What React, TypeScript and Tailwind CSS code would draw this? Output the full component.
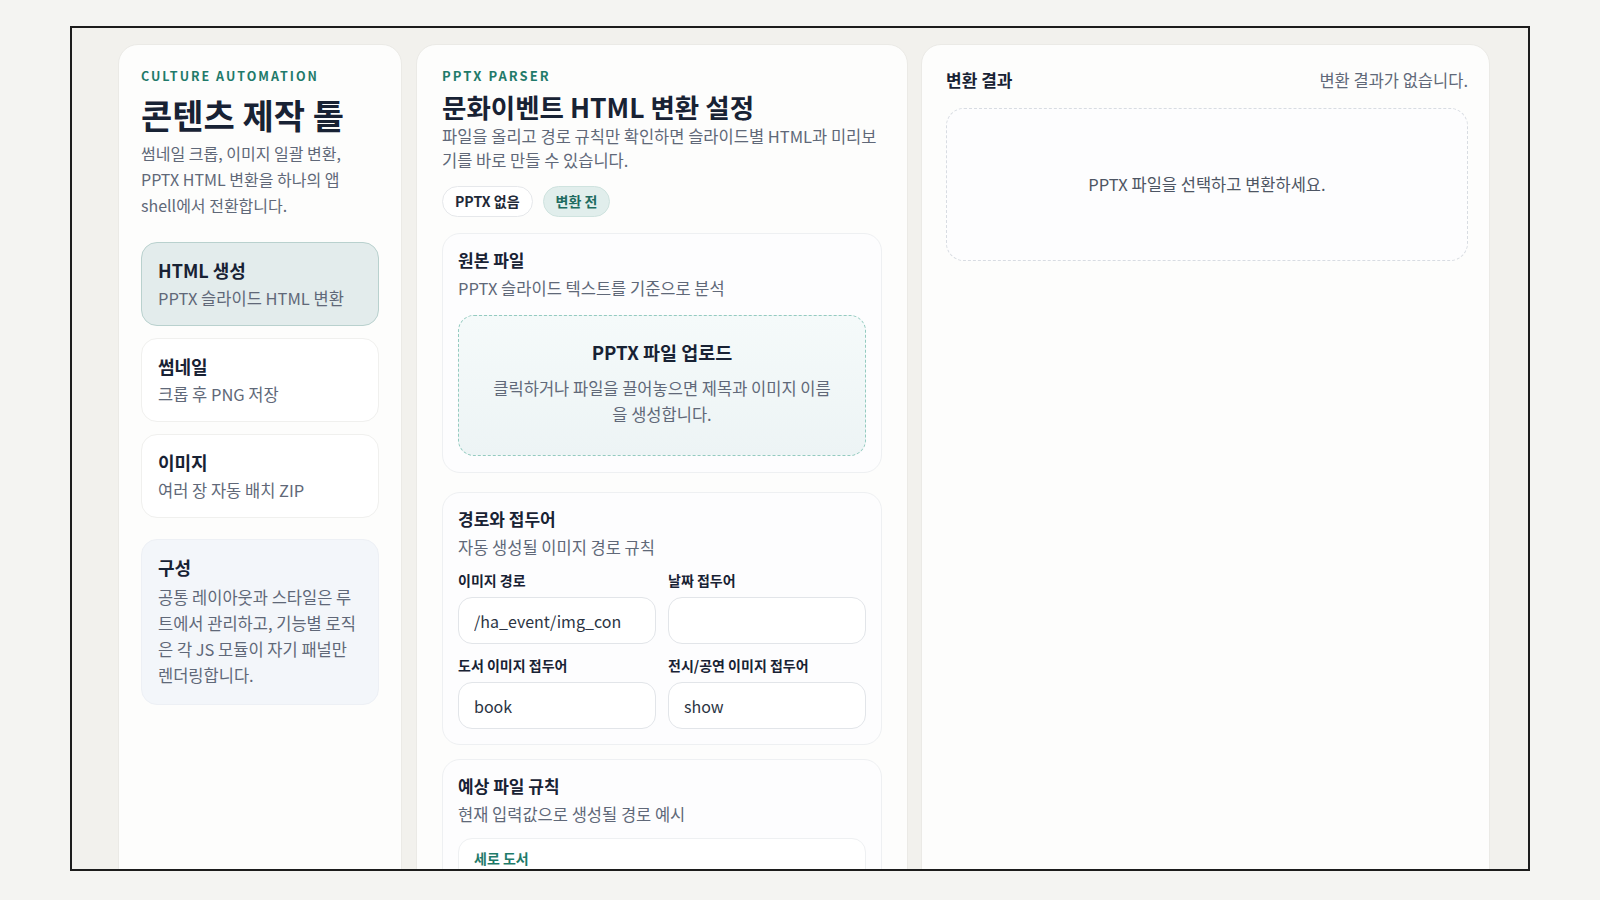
import React from 'react';

const navItems = [
    {title: 'HTML 생성', desc: 'PPTX 슬라이드 HTML 변환', active: true},
    {title: '썸네일', desc: '크롭 후 PNG 저장', active: false},
    {title: '이미지', desc: '여러 장 자동 배치 ZIP', active: false},
];

const fields = [
    {label: '이미지 경로', value: '/ha_event/img_con'},
    {label: '날짜 접두어', value: ''},
    {label: '도서 이미지 접두어', value: 'book'},
    {label: '전시/공연 이미지 접두어', value: 'show'},
];

const Sidebar = () => (
    <aside className="w-[284px] shrink-0 h-[860px] rounded-[20px] bg-[#fdfdfc] border border-[#ebeae6] px-[22px] pt-[23px]">
        <p className="text-[12.5px] font-bold tracking-[0.16em] leading-4 text-[#1f7a6a]">CULTURE AUTOMATION</p>
        <h1 className="mt-[10px] text-[34px] font-bold leading-[42px] text-[#182234]">콘텐츠 제작 톨</h1>
        <p className="mt-[4px] w-[220px] text-[16px] leading-[26px] text-[#606878]">
            썸네일 크롭, 이미지 일괄 변환, PPTX HTML 변환을 하나의 앱 shell에서 전환합니다.
        </p>

        <nav className="mt-[24px] flex flex-col gap-3">
            {navItems.map((item) => (
                <div
                    key={item.title}
                    className={
                        item.active
                            ? 'rounded-[16px] border border-[#b9d1ce] bg-[#e3ecec] px-4 pt-[15px] pb-[16px]'
                            : 'rounded-[16px] border border-[#f0f0ee] bg-white px-4 pt-[15px] pb-[16px]'
                    }
                >
                    <p className="text-[18px] font-bold leading-6 text-[#182234]">{item.title}</p>
                    <p className="mt-[5px] text-[16.5px] leading-[22px] text-[#606878]">{item.desc}</p>
                </div>
            ))}
        </nav>

        <div className="mt-[21px] rounded-[16px] border border-[#edf0f5] bg-[#f3f6fa] px-4 pt-[15px] pb-4">
            <p className="text-[18px] font-bold leading-6 text-[#182234]">구성</p>
            <p className="mt-[5px] w-[204px] text-[16.5px] leading-[26px] text-[#606878]">
                공통 레이아웃과 스타일은 루트에서 관리하고, 기능별 로직은 각 JS 모듈이 자기 패널만 렌더링합니다.
            </p>
        </div>
    </aside>
);

const SectionHead = ({title, desc}: {title: string; desc: string}) => (
    <>
        <h3 className="text-[17px] font-bold leading-[22px] text-[#182234]">{title}</h3>
        <p className="mt-[6px] text-[16.5px] leading-[22px] text-[#606878]">{desc}</p>
    </>
);

const Settings = () => (
    <section className="w-[492px] shrink-0 h-[860px] rounded-[20px] bg-[#fdfdfc] border border-[#ebeae6] px-[25px] pt-[23px]">
        <p className="text-[13px] font-bold tracking-[0.16em] leading-4 text-[#1f7a6a]">PPTX PARSER</p>
        <h2 className="mt-[6px] text-[26.5px] font-bold leading-[34px] text-[#182234]">문화이벤트 HTML 변환 설정</h2>
        <p className="mt-[1px] text-[16.5px] leading-[23.5px] text-[#606878]">
            파일을 올리고 경로 규칙만 확인하면 슬라이드별 HTML과 미리보기를 바로 만들 수 있습니다.
        </p>

        <div className="mt-[14px] flex gap-[10px]">
            <span className="flex h-[31px] items-center rounded-full border border-[#e6e8eb] bg-white px-[12px] text-[14px] font-semibold text-[#1f2937]">
                PPTX 없음
            </span>
            <span className="flex h-[31px] items-center rounded-full border border-[#cfe3df] bg-[#e1eeec] px-[12px] text-[14px] font-semibold text-[#1e6b5f]">
                변환 전
            </span>
        </div>

        <div className="mt-[16px] rounded-[18px] border border-[#eef0f2] bg-[#fdfdfe] px-[15px] pt-[15px] pb-4">
            <SectionHead title="원본 파일" desc="PPTX 슬라이드 텍스트를 기준으로 분석"/>
            <div className="mt-4 h-[141px] rounded-[16px] border-[1.5px] border-dashed border-[#94cbc0] bg-gradient-to-b from-[#f5fafa] to-[#edf4f5] px-[28px] pt-[24px] text-center">
                <p className="text-[18.5px] font-bold leading-6 text-[#182234]">PPTX 파일 업로드</p>
                <p className="mt-[11px] text-[16.5px] leading-[26px] text-[#606878]">
                    클릭하거나 파일을 끌어놓으면 제목과 이미지 이름을 생성합니다.
                </p>
            </div>
        </div>

        <div className="mt-[19px] rounded-[18px] border border-[#eef0f2] bg-[#fdfdfe] px-[15px] pt-[15px] pb-[15px]">
            <SectionHead title="경로와 접두어" desc="자동 생성될 이미지 경로 규칙"/>
            <div className="mt-[13px] grid grid-cols-2 gap-x-3 gap-y-3">
                {fields.map((f) => (
                    <label key={f.label} className="block">
                        <span className="block text-[14px] font-bold leading-[18px] text-[#182234]">{f.label}</span>
                        <input
                            readOnly
                            value={f.value}
                            className="mt-[8px] h-[47px] w-full rounded-[14px] border border-[#e2e5e9] bg-white px-[15px] text-[16px] text-[#2b3443] outline-none"
                        />
                    </label>
                ))}
            </div>
        </div>

        <div className="mt-[14px] rounded-[18px] border border-[#eef0f2] bg-[#fdfdfe] px-[15px] pt-[15px] pb-4">
            <SectionHead title="예상 파일 규칙" desc="현재 입력값으로 생성될 경로 예시"/>
            <div className="mt-[13px] h-[60px] rounded-[14px] border border-[#eef0f2] bg-white px-[15px] pt-[10px]">
                <p className="text-[14px] font-bold leading-[18px] text-[#1f7a6a]">세로 도서</p>
            </div>
        </div>
    </section>
);

const Result = () => (
    <section className="w-[569px] shrink-0 h-[860px] rounded-[20px] bg-[#fdfdfc] border border-[#ebeae6] pl-6 pr-[21px] pt-6">
        <div className="flex items-center justify-between">
            <h2 className="text-[17px] font-bold leading-[22px] text-[#182234]">변환 결과</h2>
            <span className="text-[16.5px] leading-[22px] text-[#606878]">변환 결과가 없습니다.</span>
        </div>
        <div className="mt-[17px] flex h-[153px] items-center justify-center rounded-[18px] border border-dashed border-[#d8dce2] bg-[#fdfdfe]">
            <p className="text-[16.5px] text-[#4d5563]">PPTX 파일을 선택하고 변환하세요.</p>
        </div>
    </section>
);

export default function App() {
    return (
        <div className="h-[900px] w-[1600px] overflow-hidden bg-[#f4f4f2] pt-[26px] pl-[70px] font-['Noto_Sans_CJK_KR','Noto_Sans',sans-serif]">
            <div className="h-[845px] w-[1460px] overflow-hidden border-2 border-[#1c1c1c] bg-[#f2f1ed]">
                <div className="flex pt-4 pl-[46px]">
                    <Sidebar/>
                    <div className="w-[14px] shrink-0"/>
                    <Settings/>
                    <div className="w-[13px] shrink-0"/>
                    <Result/>
                </div>
            </div>
        </div>
    );
}
